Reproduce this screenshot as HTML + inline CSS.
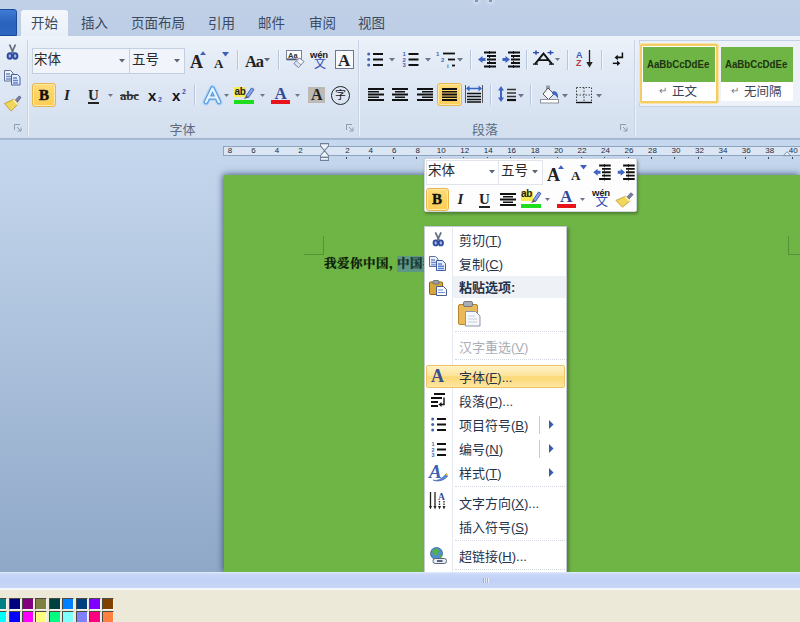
<!DOCTYPE html>
<html lang="zh-CN">
<head>
<meta charset="utf-8">
<title>Word</title>
<style>
*{box-sizing:border-box;margin:0;padding:0}
html,body{width:800px;height:622px;overflow:hidden;background:#c2d3e8;font-family:"Liberation Sans","Noto Sans CJK SC",sans-serif;}
.a{position:absolute}
svg{position:absolute;overflow:visible}
#top{left:0;top:0;width:800px;height:37px;background:linear-gradient(#c0d0e7,#bccde5);}
#filebtn{left:-4px;top:9px;width:21px;height:27px;border-radius:3px 3px 0 0;background:linear-gradient(#3f7bd6,#2a62bd 50%,#2c66c2);border:1px solid #1a4a9c;}
#tabhome{left:21px;top:10px;width:47px;height:28px;background:linear-gradient(#f4f8fc,#e8eff8);border-radius:3px 3px 0 0;}
.tab{top:14.5px;font-size:13.5px;color:#3b4a5f;white-space:nowrap;line-height:18px;}
#ribbon{left:0;top:36px;width:800px;height:102.5px;background:linear-gradient(#eef3fa,#e3ebf6 25%,#dbe5f3 60%,#d3dfee);border-bottom:1px solid #a3b5ce;box-shadow:0 1px 1px rgba(150,170,200,.6);}
.gsep{top:40px;width:1px;height:96px;background:#c8d4e5;box-shadow:1px 0 0 #eef3fa;}
.sep{width:1px;height:20px;background:#b7c6da;box-shadow:1px 0 0 #f2f6fb;}
.glabel{top:121.5px;font-size:13px;color:#5d6c82;line-height:16px;}
#work{left:0;top:140px;width:800px;height:432px;background:linear-gradient(#c6d8ee,#8fa8c8);}
#ruler{left:223px;top:146px;width:577px;height:10px;background:#dbe6f5;border:1px solid #8fa3bf;border-right:0;}
.rn{top:145px;font-size:8px;color:#1f2a40;width:20px;text-align:center;line-height:12px;}
#page{left:224px;top:175px;width:576px;height:397px;background:#6fb545;box-shadow:0 -1px 7px rgba(55,80,125,.6),-2px 0 5px rgba(70,85,115,.45);}
#hbar{left:0;top:572px;width:800px;height:16px;background:linear-gradient(#e4ecfc 0,#c9d8f8 2px,#c0d0f5 50%,#c8d7f8);}
#paint{left:0;top:588px;width:800px;height:34px;background:#ece9d8;border-top:2px solid #f6f7fb;}
.sw{width:12px;height:12px;border:1px solid;border-color:#4a4a44 #f7f6ee #f7f6ee #4a4a44;}
.combo{background:#f1f5fb;border:1px solid #c3d0e2;height:26px;}
.ctext{font-size:13.5px;color:#2b2b2b;line-height:18px;white-space:nowrap}
.btnon{background:linear-gradient(#ffdc7c,#fed362 45%,#fdcf58);border:1px solid #e8b54a;border-radius:3px;box-shadow:inset 0 0 0 1px #ffe9a8;}
.ser{font-family:"Liberation Serif",serif;font-weight:bold;color:#222;white-space:nowrap}
.mi{left:459px;font-size:13px;color:#26324a;line-height:18px;white-space:nowrap}
.msep{left:455px;width:110px;height:0;border-top:1px dotted #d3d7df}
u{text-decoration:underline}
</style>
</head>
<body>
<div id="top" class="a"></div>
<div class="a" style="left:475px;top:-2px;width:3px;height:4px;background:#6d7a92;box-shadow:0 0 3px 2px #dbe5f3;opacity:.7"></div><div class="a" style="left:489px;top:-2px;width:3px;height:4px;background:#6d7a92;box-shadow:0 0 3px 2px #dbe5f3;opacity:.7"></div>
<div id="filebtn" class="a"></div>
<div id="tabhome" class="a"></div>
<div class="a tab" style="left:31px">开始</div>
<div class="a tab" style="left:81px">插入</div>
<div class="a tab" style="left:131px">页面布局</div>
<div class="a tab" style="left:208px">引用</div>
<div class="a tab" style="left:258px">邮件</div>
<div class="a tab" style="left:309px">审阅</div>
<div class="a tab" style="left:358px">视图</div>
<div id="ribbon" class="a"></div>
<div class="a gsep" style="left:27px"></div>
<div class="a gsep" style="left:358px"></div>
<div class="a gsep" style="left:634px"></div>
<div class="a glabel" style="left:169.5px">字体</div>
<div class="a glabel" style="left:472px">段落</div>
<!-- clipboard group icons -->
<svg style="left:7px;top:44px" width="11" height="16" viewBox="0 0 11 16"><path d="M2.5 0.5 L6.3 9 M8.5 0.5 L4.7 9" stroke="#666f80" stroke-width="1.8" fill="none"/><ellipse cx="2.8" cy="12" rx="2.2" ry="2.8" fill="#aebde6" stroke="#2f4da0" stroke-width="2"/><ellipse cx="8.2" cy="12" rx="2.2" ry="2.8" fill="#aebde6" stroke="#2f4da0" stroke-width="2"/></svg>
<svg style="left:4px;top:70px" width="18" height="16" viewBox="0 0 18 16"><path d="M0.5 0.5h6l2.5 2.5v8h-8.5z" fill="#eef3fb" stroke="#5d6f93"/><path d="M2 4h4M2 6.5h5M2 9h5" stroke="#6f8cc8" stroke-width="1.3"/><path d="M7.5 4.5h6l2.5 2.5v8h-8.5z" fill="#e6eefb" stroke="#3f5fa8"/><path d="M9 8h4M9 10.5h5M9 13h5" stroke="#5f82d4" stroke-width="1.4"/></svg>
<svg style="left:3px;top:95px" width="20" height="17" viewBox="0 0 20 18"><path d="M12 6 L16.5 1 L18.5 2.5 L14.5 8z" fill="#7a7da8" stroke="#55587e" stroke-width=".8"/><path d="M1 9 L11 4.5 L15.5 9.5 L8 17 Z" fill="#f1d65c" stroke="#b9962e" stroke-width=".9"/><path d="M10.5 5 L15 10" stroke="#fff6c8" stroke-width="1.5"/></svg>
<svg style="left:14px;top:124px" width="8" height="8" viewBox="0 0 8 8"><path d="M0.5 6V0.5H6" stroke="#8e9bb0" fill="none"/><path d="M3 3L7 7M7 3.5V7H3.5" stroke="#8e9bb0" fill="none"/></svg>
<svg style="left:346px;top:124px" width="8" height="8" viewBox="0 0 8 8"><path d="M0.5 6V0.5H6" stroke="#8e9bb0" fill="none"/><path d="M3 3L7 7M7 3.5V7H3.5" stroke="#8e9bb0" fill="none"/></svg>
<svg style="left:620px;top:124px" width="8" height="8" viewBox="0 0 8 8"><path d="M0.5 6V0.5H6" stroke="#8e9bb0" fill="none"/><path d="M3 3L7 7M7 3.5V7H3.5" stroke="#8e9bb0" fill="none"/></svg>

<!-- row 1 : font combos -->
<div class="a combo" style="left:32px;top:48px;width:98px"></div>
<div class="a combo" style="left:129px;top:48px;width:56px"></div>
<div class="a ctext" style="left:34px;top:51px">宋体</div>
<div class="a ctext" style="left:132px;top:51px">五号</div>
<svg style="left:119px;top:59px" width="6" height="4" viewBox="0 0 6 4"><path d="M0 0h6l-3 3.5z" fill="#5b6577"/></svg>
<svg style="left:174px;top:59px" width="6" height="4" viewBox="0 0 6 4"><path d="M0 0h6l-3 3.5z" fill="#5b6577"/></svg>
<!-- grow / shrink -->
<div class="a ser" style="left:190px;top:51px;font-size:18px;line-height:22px">A</div>
<svg style="left:200px;top:51px" width="6" height="4" viewBox="0 0 6 4"><path d="M0 4h6l-3 -3.8z" fill="#3e5fb5"/></svg>
<div class="a ser" style="left:214px;top:54.5px;font-size:13px;line-height:18px">A</div>
<svg style="left:222px;top:52px" width="7" height="5" viewBox="0 0 7 5"><path d="M0 0h7l-3.5 4.5z" fill="#3e5fb5"/></svg>
<div class="a sep" style="left:237px;top:50px"></div>
<div class="a ser" style="left:245px;top:50.5px;font-size:16.5px;line-height:22px;letter-spacing:-1.2px">Aa</div>
<svg style="left:264px;top:58px" width="6" height="4" viewBox="0 0 6 4"><path d="M0 0h6l-3 3.5z" fill="#5b6577"/></svg>
<div class="a sep" style="left:278px;top:50px"></div>
<!-- clear formatting -->
<svg style="left:286px;top:50px" width="19" height="18" viewBox="0 0 19 18"><rect x="0.5" y="0.5" width="15" height="8.5" fill="#fdfdff" stroke="#77839a"/><text x="2" y="7.5" font-family="Liberation Sans, sans-serif" font-size="7.5" font-weight="bold" fill="#333">Aa</text><path d="M0.5 9.5h10" stroke="#4a5878" stroke-width="1.6"/><path d="M8 13.5 L13.5 8 L18 11.5 L12.5 17.5 Z" fill="#f4f6fb" stroke="#7783a0" stroke-width="1"/><path d="M8 13.5 L10.5 11 L15 15 L12.5 17.5Z" fill="#dfe5f2" stroke="#7783a0" stroke-width=".8"/></svg>
<!-- phonetic guide -->
<div class="a" style="left:310px;top:50px;font-size:9.5px;font-weight:bold;color:#222;line-height:10px;letter-spacing:-.2px">wén</div>
<div class="a" style="left:314px;top:57.5px;font-size:12px;color:#2f49b8;line-height:13px;font-family:'Liberation Sans','Noto Sans CJK SC',sans-serif">文</div>
<!-- boxed A -->
<div class="a" style="left:335px;top:50px;width:18.5px;height:18.5px;border:1px solid #6c7891;background:#f7f9fc"></div>
<div class="a ser" style="left:338px;top:50px;font-size:17px;line-height:22px">A</div>

<!-- paragraph row 1 -->
<svg style="left:367px;top:52px" width="17" height="15" viewBox="0 0 17 15"><g fill="#4663b4"><circle cx="1.7" cy="2" r="1.5"/><circle cx="1.7" cy="7.5" r="1.5"/><circle cx="1.7" cy="13" r="1.5"/></g><path d="M6 2h10M6 7.5h10M6 13h10" stroke="#111" stroke-width="2"/></svg>
<svg style="left:389px;top:58px" width="6" height="4" viewBox="0 0 6 4"><path d="M0 0h6l-3 3.5z" fill="#6b7689"/></svg>
<svg style="left:402px;top:50px" width="17" height="18" viewBox="0 0 17 18"><g font-family="Liberation Sans, sans-serif" font-size="6" font-weight="bold" fill="#4663b4"><text x="0.5" y="6">1</text><text x="0.5" y="11.5">2</text><text x="0.5" y="17">3</text></g><path d="M6.5 4h10M6.5 9.5h10M6.5 15h10" stroke="#111" stroke-width="2"/></svg>
<svg style="left:425px;top:58px" width="6" height="4" viewBox="0 0 6 4"><path d="M0 0h6l-3 3.5z" fill="#6b7689"/></svg>
<svg style="left:436px;top:50px" width="20" height="18" viewBox="0 0 20 18"><g font-family="Liberation Sans, sans-serif" font-size="6" font-weight="bold" fill="#4663b4"><text x="0" y="6">1</text><text x="5" y="12">2</text><text x="11" y="17.5">i</text></g><path d="M7 3.5h12" stroke="#111" stroke-width="1.8"/><path d="M12 9.5h7" stroke="#111" stroke-width="1.8"/><path d="M16 15.5h3" stroke="#111" stroke-width="1.8"/></svg>
<svg style="left:457px;top:58px" width="6" height="4" viewBox="0 0 6 4"><path d="M0 0h6l-3 3.5z" fill="#6b7689"/></svg>
<div class="a sep" style="left:470px;top:50px"></div>
<!-- decrease / increase indent -->
<svg style="left:478px;top:51px" width="18" height="17" viewBox="0 0 18 17"><path d="M6 1.5h12M9 5h9M9 8.5h9M9 12h9M6 15.5h12" stroke="#111" stroke-width="2"/><path d="M11.5 0v17" stroke="#111" stroke-width="1" stroke-dasharray="1 1"/><path d="M0 8.5l4.5 -3.5v2h3v3h-3v2z" fill="#3f63c0"/></svg>
<svg style="left:502px;top:51px" width="18" height="17" viewBox="0 0 18 17"><path d="M6 1.5h12M9 5h9M9 8.5h9M9 12h9M6 15.5h12" stroke="#111" stroke-width="2"/><path d="M11.5 0v17" stroke="#111" stroke-width="1" stroke-dasharray="1 1"/><path d="M8 8.5l-4.5 -3.5v2h-3v3h3v2z" fill="#3f63c0"/></svg>
<div class="a sep" style="left:526px;top:50px"></div>
<!-- asian layout -->
<svg style="left:533px;top:50px" width="21" height="15" viewBox="0 0 21 17" preserveAspectRatio="none"><path d="M2 16 L10.5 4 L19 16 M5.5 11.5 h10" stroke="#111" stroke-width="2" fill="none"/><path d="M0 16h5M16 16h5" stroke="#111" stroke-width="1.6"/><path d="M0 3h6M3 0.5v5M14.5 3h6M17.5 0.5v5" stroke="#2a46b0" stroke-width="1.5"/></svg>
<svg style="left:555px;top:58px" width="5" height="4" viewBox="0 0 5 4"><path d="M0 0h5l-2.5 3z" fill="#6b7689"/></svg>
<div class="a sep" style="left:567px;top:50px"></div>
<!-- sort -->
<div class="a" style="left:576px;top:49.5px;font-size:9px;font-weight:bold;color:#3b5ab3;line-height:11px">A</div>
<div class="a" style="left:576px;top:58px;font-size:9px;font-weight:bold;color:#b43c46;line-height:11px">Z</div>
<svg style="left:586px;top:50px" width="7" height="18" viewBox="0 0 7 18"><path d="M3.5 0v14" stroke="#222" stroke-width="1.3"/><path d="M0.3 12l3.2 5.5l3.2 -5.5z" fill="#222"/></svg>
<div class="a sep" style="left:601px;top:50px"></div>
<!-- show marks -->
<svg style="left:612px;top:52px" width="12.5" height="14.5" viewBox="0 0 15 16" preserveAspectRatio="none"><path d="M12.5 0.5v5.5h-7" stroke="#111" stroke-width="1.8" fill="none"/><path d="M3 6l4 -3v6z" fill="#111"/><path d="M1 12.5h6" stroke="#111" stroke-width="1.6"/><path d="M6 9.5l4 3l-4 3z" fill="#111"/></svg>

<!-- row 2 -->
<div class="a btnon" style="left:32px;top:83px;width:24px;height:23.5px"></div>
<div class="a ser" style="left:39px;top:86px;font-size:15px;line-height:18px;color:#111;-webkit-text-stroke:.5px #111">B</div>
<div class="a ser" style="left:64px;top:86px;font-size:15px;line-height:18px;font-style:italic;font-weight:bold">I</div>
<div class="a ser" style="left:88px;top:86px;font-size:15px;line-height:18px;">U</div>
<div class="a" style="left:88px;top:102px;width:11px;height:1.5px;background:#222"></div>
<svg style="left:108px;top:94px" width="5" height="4" viewBox="0 0 5 4"><path d="M0 0h5l-2.5 3z" fill="#6b7689"/></svg>
<div class="a ser" style="left:120px;top:87px;font-size:13px;line-height:18px;color:#333;text-decoration:line-through;letter-spacing:-.3px">abc</div>
<div class="a" style="left:148px;top:86px;font-size:15px;line-height:20px;font-weight:bold;color:#111">x</div>
<div class="a" style="left:158px;top:96px;font-size:7px;line-height:8px;font-weight:bold;color:#3b5ab3">2</div>
<div class="a" style="left:172px;top:86px;font-size:15px;line-height:20px;font-weight:bold;color:#111">x</div>
<div class="a" style="left:182px;top:87.5px;font-size:7px;line-height:8px;font-weight:bold;color:#3b5ab3">2</div>
<div class="a sep" style="left:194px;top:85px"></div>
<!-- text effects glow A -->
<svg style="left:202px;top:85px" width="21" height="20" viewBox="0 0 21 20"><path d="M4 17 L10.5 3.5 L17 17 M7 12.5h7" stroke="#a9d0f5" stroke-width="7" fill="none" stroke-linecap="round" stroke-linejoin="round" opacity=".85"/><path d="M4 17 L10.5 3.5 L17 17 M7 12.5h7" stroke="#5a9be0" stroke-width="4.6" fill="none" stroke-linecap="round" stroke-linejoin="round"/><path d="M4 17 L10.5 3.5 L17 17 M7 12.5h7" stroke="#eaf4ff" stroke-width="2.2" fill="none" stroke-linecap="round" stroke-linejoin="round"/></svg>
<svg style="left:224px;top:94px" width="5" height="4" viewBox="0 0 5 4"><path d="M0 0h5l-2.5 3z" fill="#6b7689"/></svg>
<!-- highlight -->
<div class="a" style="left:234px;top:87px;width:12px;height:10px;background:#f7ec52"></div>
<div class="a" style="left:234.5px;top:85.5px;font-size:10px;font-weight:bold;line-height:12px;color:#222;letter-spacing:-.3px">ab</div>
<svg style="left:243px;top:86px" width="12" height="14" viewBox="0 0 12 14"><path d="M3 10 L8.5 2 L11 3.5 L5.5 11.5Z" fill="#8aa6e4" stroke="#3b58ad" stroke-width=".9"/><path d="M1 13 L3 10 L5.5 11.5Z" fill="#555"/></svg>
<div class="a" style="left:234px;top:100px;width:20px;height:4px;background:#1fdd1f"></div>
<svg style="left:260px;top:94px" width="5" height="4" viewBox="0 0 5 4"><path d="M0 0h5l-2.5 3z" fill="#6b7689"/></svg>
<!-- font colour -->
<div class="a ser" style="left:274.5px;top:84px;font-size:17px;line-height:20px;color:#2f4a9c">A</div>
<div class="a" style="left:271px;top:100px;width:19px;height:4px;background:#e8141c"></div>
<svg style="left:295px;top:94px" width="5" height="4" viewBox="0 0 5 4"><path d="M0 0h5l-2.5 3z" fill="#6b7689"/></svg>
<!-- char shading -->
<div class="a" style="left:308px;top:87px;width:17px;height:16px;background:#bdbab4"></div>
<div class="a ser" style="left:311px;top:85px;font-size:16px;line-height:20px;color:#222">A</div>
<!-- enclosed char -->
<div class="a" style="left:331px;top:86px;width:19px;height:19px;border:1.5px solid #222;border-radius:50%"></div>
<div class="a" style="left:335px;top:89px;font-size:11px;line-height:13px;color:#111">字</div>

<!-- paragraph row 2 -->
<svg style="left:368px;top:88px" width="16" height="13" viewBox="0 0 16 13"><path d="M0 1h16M0 6.5h16M0 12h16" stroke="#111" stroke-width="2"/><path d="M0 3.8h11M0 9.3h11" stroke="#111" stroke-width="1.5"/></svg>
<svg style="left:392px;top:88px" width="16" height="13" viewBox="0 0 16 13"><path d="M0 1h16M0 6.5h16M0 12h16" stroke="#111" stroke-width="2"/><path d="M3 3.8h10M3 9.3h10" stroke="#111" stroke-width="1.5"/></svg>
<svg style="left:417px;top:88px" width="16" height="13" viewBox="0 0 16 13"><path d="M0 1h16M0 6.5h16M0 12h16" stroke="#111" stroke-width="2"/><path d="M5 3.8h11M5 9.3h11" stroke="#111" stroke-width="1.5"/></svg>
<div class="a btnon" style="left:437px;top:83px;width:25px;height:23px"></div>
<svg style="left:442px;top:88px" width="15" height="13" viewBox="0 0 15 13"><path d="M0 1h15M0 6.5h15M0 12h15" stroke="#111" stroke-width="2"/><path d="M0 3.8h15M0 9.3h15" stroke="#111" stroke-width="1.5"/></svg>
<svg style="left:465px;top:85px" width="18" height="18" viewBox="0 0 18 18"><path d="M0.5 0v18M17.5 0v18" stroke="#555" stroke-width="1"/><path d="M2 3.5h14" stroke="#3466c8" stroke-width="1.5"/><path d="M1 3.5l3.5 -3v6zM17 3.5l-3.5 -3v6z" fill="#3466c8"/><path d="M2 8.5h14M2 11.5h14M2 14.5h14M2 17h14" stroke="#111" stroke-width="1.6"/></svg>
<div class="a sep" style="left:490px;top:85px"></div>
<!-- line spacing -->
<svg style="left:498px;top:85px" width="19" height="18" viewBox="0 0 19 18"><path d="M3 1l3 4.5h-2v7h2l-3 4.5l-3 -4.5h2v-7h-2z" fill="#3f63c0"/><path d="M9 4.5h9M9 8h9M9 11.5h9" stroke="#333" stroke-width="1.3"/><path d="M9 15h9" stroke="#111" stroke-width="2.2"/></svg>
<svg style="left:518px;top:94px" width="6" height="4" viewBox="0 0 6 4"><path d="M0 0h6l-3 3.5z" fill="#6b7689"/></svg>
<div class="a sep" style="left:530px;top:85px"></div>
<!-- shading bucket -->
<svg style="left:540px;top:84px" width="20" height="20" viewBox="0 0 20 20"><path d="M7 1.5 v6 M9 1.5 v6" stroke="#555" stroke-width="1"/><path d="M3 10 L8 4 L14 10 L8.5 15.5Z" fill="#f6f8fc" stroke="#555" stroke-width="1"/><path d="M13 7 C17 7 18.5 10 18 14.5 C16 12 15 10.5 12 10Z" fill="#3f66c4"/><rect x="0.5" y="15.5" width="18" height="3.5" fill="#fff" stroke="#8c919c"/></svg>
<svg style="left:562px;top:94px" width="6" height="4" viewBox="0 0 6 4"><path d="M0 0h6l-3 3.5z" fill="#6b7689"/></svg>
<!-- borders -->
<svg style="left:576px;top:87px" width="16" height="16" viewBox="0 0 16 16"><path d="M0.5 0.5h15M0.5 0.5v15M15.5 0.5v15M8 0.5v15M0.5 8h15" stroke="#444" stroke-width="1" stroke-dasharray="1.5 1.5" fill="none"/><path d="M0 15.5h16" stroke="#111" stroke-width="1.4"/></svg>
<svg style="left:596px;top:94px" width="6" height="4" viewBox="0 0 6 4"><path d="M0 0h6l-3 3.5z" fill="#6b7689"/></svg>

<!-- styles gallery -->
<div class="a" style="left:639px;top:40px;width:161px;height:67px;background:#edf2fa;border:1px solid #c5d2e4;border-right:0"></div>
<div class="a" style="left:640px;top:44px;width:78px;height:59px;background:#fff;border:2px solid #f3cd63;border-radius:2px;box-shadow:0 0 0 1px #f8e4a8"></div>
<div class="a" style="left:643px;top:47px;width:72px;height:35px;background:#6fb545"></div>
<div class="a" style="left:721px;top:47px;width:72px;height:35px;background:#6fb545"></div>
<div class="a" style="left:721px;top:82px;width:72px;height:19px;background:#fff"></div>
<div class="a" style="left:647px;top:57px;font-size:11.5px;font-weight:bold;color:#1c3310;line-height:14px;transform:scaleX(.84);transform-origin:0 0">AaBbCcDdEe</div>
<div class="a" style="left:725px;top:57px;font-size:11.5px;font-weight:bold;color:#1c3310;line-height:14px;transform:scaleX(.84);transform-origin:0 0">AaBbCcDdEe</div>
<div class="a" style="left:659px;top:84px;font-size:10px;color:#6a7690;line-height:14px">↵</div>
<div class="a" style="left:672px;top:84px;font-size:12.5px;color:#3b4558;line-height:16px">正文</div>
<div class="a" style="left:731px;top:84px;font-size:10px;color:#6a7690;line-height:14px">↵</div>
<div class="a" style="left:744px;top:84px;font-size:12.5px;color:#3b4558;line-height:16px">无间隔</div>


<div id="work" class="a"></div>
<div id="ruler" class="a"></div>
<div class="a rn" style="left:220.0px">8</div><div class="a rn" style="left:243.5px">6</div><div class="a rn" style="left:266.9px">4</div><div class="a rn" style="left:290.4px">2</div><div class="a" style="left:345.9px;top:157px;width:1px;height:2px;background:#3f4a5e"></div><div class="a rn" style="left:337.4px">2</div><div class="a" style="left:369.3px;top:157px;width:1px;height:2px;background:#3f4a5e"></div><div class="a rn" style="left:360.8px">4</div><div class="a" style="left:392.8px;top:157px;width:1px;height:2px;background:#3f4a5e"></div><div class="a rn" style="left:384.3px">6</div><div class="a" style="left:416.3px;top:157px;width:1px;height:2px;background:#3f4a5e"></div><div class="a rn" style="left:407.8px">8</div><div class="a" style="left:439.7px;top:157px;width:1px;height:2px;background:#3f4a5e"></div><div class="a rn" style="left:431.2px">10</div><div class="a" style="left:463.2px;top:157px;width:1px;height:2px;background:#3f4a5e"></div><div class="a rn" style="left:454.7px">12</div><div class="a" style="left:486.7px;top:157px;width:1px;height:2px;background:#3f4a5e"></div><div class="a rn" style="left:478.2px">14</div><div class="a" style="left:510.1px;top:157px;width:1px;height:2px;background:#3f4a5e"></div><div class="a rn" style="left:501.6px">16</div><div class="a" style="left:533.6px;top:157px;width:1px;height:2px;background:#3f4a5e"></div><div class="a rn" style="left:525.1px">18</div><div class="a" style="left:557.1px;top:157px;width:1px;height:2px;background:#3f4a5e"></div><div class="a rn" style="left:548.6px">20</div><div class="a" style="left:580.5px;top:157px;width:1px;height:2px;background:#3f4a5e"></div><div class="a rn" style="left:572.0px">22</div><div class="a" style="left:604.0px;top:157px;width:1px;height:2px;background:#3f4a5e"></div><div class="a rn" style="left:595.5px">24</div><div class="a" style="left:627.5px;top:157px;width:1px;height:2px;background:#3f4a5e"></div><div class="a rn" style="left:619.0px">26</div><div class="a" style="left:651.0px;top:157px;width:1px;height:2px;background:#3f4a5e"></div><div class="a rn" style="left:642.5px">28</div><div class="a" style="left:674.4px;top:157px;width:1px;height:2px;background:#3f4a5e"></div><div class="a rn" style="left:665.9px">30</div><div class="a" style="left:697.9px;top:157px;width:1px;height:2px;background:#3f4a5e"></div><div class="a rn" style="left:689.4px">32</div><div class="a" style="left:721.4px;top:157px;width:1px;height:2px;background:#3f4a5e"></div><div class="a rn" style="left:712.9px">34</div><div class="a" style="left:744.8px;top:157px;width:1px;height:2px;background:#3f4a5e"></div><div class="a rn" style="left:736.3px">36</div><div class="a" style="left:768.3px;top:157px;width:1px;height:2px;background:#3f4a5e"></div><div class="a rn" style="left:759.8px">38</div><div class="a" style="left:791.8px;top:157px;width:1px;height:2px;background:#3f4a5e"></div><div class="a rn" style="left:783.3px">40</div>
<div id="page" class="a"></div>
<!-- ruler indent markers -->
<svg style="left:319.5px;top:143px" width="9" height="18" viewBox="0 0 10 15" preserveAspectRatio="none"><path d="M0.5 0.5h9v2l-4.5 4l-4.5 -4z" fill="#eef3fa" stroke="#6f7f98"/><path d="M0.5 10.5l4.5 -4l4.5 4v1.5h-9z" fill="#eef3fa" stroke="#6f7f98"/><rect x="0.5" y="12" width="9" height="2.5" fill="#eef3fa" stroke="#6f7f98"/></svg>
<svg style="left:783px;top:149px" width="8" height="7" viewBox="0 0 10 9" preserveAspectRatio="none"><path d="M0.5 8.5l4.5 -5l4.5 5z" fill="#eef3fa" stroke="#6f7f98"/></svg>
<!-- crop marks -->
<div class="a" style="left:304px;top:236px;width:20px;height:19px;border-right:1px solid #4f8a35;border-bottom:1px solid #4f8a35;opacity:.8"></div>
<div class="a" style="left:788px;top:236px;width:14px;height:19px;border-left:1px solid #4f8a35;border-bottom:1px solid #4f8a35;opacity:.8"></div>
<!-- document text -->
<div class="a" style="left:397px;top:256px;width:30px;height:16px;background:#5f9787"></div>
<div class="a" style="left:324px;top:255px;font-family:'Liberation Serif','Noto Serif CJK SC',serif;font-weight:bold;font-size:12.5px;letter-spacing:.5px;line-height:18px;color:#0b1a06;-webkit-text-stroke:.25px #0b1a06;white-space:nowrap">我爱你中国<span style="margin-right:-5px">，</span><span style="color:#123a3a">中国我</span></div>

<!-- mini toolbar -->
<div class="a" style="left:424px;top:158px;width:213px;height:54px;background:#fdfdfe;border:1px solid #cfd6df;border-radius:2px;box-shadow:1px 2px 3px rgba(40,60,30,.45)"></div>
<div class="a" style="left:426px;top:160px;width:73px;height:25px;border:1px solid #e0e5ec;background:#fff"></div>
<div class="a" style="left:498px;top:160px;width:45px;height:25px;border:1px solid #e0e5ec;background:#fff"></div>
<div class="a ctext" style="left:428px;top:162px;font-size:13.5px">宋体</div>
<div class="a ctext" style="left:501px;top:162px;font-size:13.5px">五号</div>
<svg style="left:489px;top:170px" width="6" height="4" viewBox="0 0 6 4"><path d="M0 0h6l-3 3.5z" fill="#5b6577"/></svg>
<svg style="left:532px;top:170px" width="6" height="4" viewBox="0 0 6 4"><path d="M0 0h6l-3 3.5z" fill="#5b6577"/></svg>
<div class="a ser" style="left:547px;top:164px;font-size:18px;line-height:22px">A</div>
<svg style="left:557.5px;top:164.5px" width="6" height="4" viewBox="0 0 6 4"><path d="M0 4h6l-3 -3.8z" fill="#3e5fb5"/></svg>
<div class="a ser" style="left:571px;top:167px;font-size:13px;line-height:18px">A</div>
<svg style="left:579.5px;top:165px" width="7" height="5" viewBox="0 0 7 5"><path d="M0 0h7l-3.5 4.5z" fill="#3e5fb5"/></svg>
<svg style="left:593px;top:163.5px" width="18" height="16.5" viewBox="0 0 18 17"><path d="M6 1.5h12M9 5h9M9 8.5h9M9 12h9M6 15.5h12" stroke="#111" stroke-width="2"/><path d="M11.5 0v17" stroke="#111" stroke-width="1" stroke-dasharray="1 1"/><path d="M0 8.5l4.5 -3.5v2h3v3h-3v2z" fill="#3f63c0"/></svg>
<svg style="left:616.5px;top:163.5px" width="18" height="16.5" viewBox="0 0 18 17"><path d="M6 1.5h12M9 5h9M9 8.5h9M9 12h9M6 15.5h12" stroke="#111" stroke-width="2"/><path d="M11.5 0v17" stroke="#111" stroke-width="1" stroke-dasharray="1 1"/><path d="M8 8.5l-4.5 -3.5v2h-3v3h3v2z" fill="#3f63c0"/></svg>
<!-- mini row 2 -->
<div class="a btnon" style="left:426px;top:188px;width:23px;height:23px"></div>
<div class="a ser" style="left:432px;top:190px;font-size:15px;line-height:18px;color:#111;-webkit-text-stroke:.4px #111">B</div>
<div class="a ser" style="left:457.5px;top:190px;font-size:15px;line-height:18px;font-style:italic">I</div>
<div class="a ser" style="left:479px;top:190px;font-size:15px;line-height:18px">U</div>
<div class="a" style="left:479px;top:206px;width:11px;height:1.5px;background:#222"></div>
<svg style="left:500px;top:193px" width="16" height="13" viewBox="0 0 16 13"><path d="M0 1h16M0 6.5h16M0 12h16" stroke="#111" stroke-width="2"/><path d="M3 3.8h10M3 9.3h10" stroke="#111" stroke-width="1.5"/></svg>
<div class="a" style="left:521px;top:191px;width:12px;height:10px;background:#f7ec52"></div>
<div class="a" style="left:521px;top:188px;font-size:10px;font-weight:bold;line-height:12px;color:#222;letter-spacing:-.3px">ab</div>
<svg style="left:530px;top:190px" width="12" height="14" viewBox="0 0 12 14"><path d="M3 10 L8.5 2 L11 3.5 L5.5 11.5Z" fill="#8aa6e4" stroke="#3b58ad" stroke-width=".9"/><path d="M1 13 L3 10 L5.5 11.5Z" fill="#555"/></svg>
<div class="a" style="left:521px;top:204px;width:20px;height:4px;background:#1fdd1f"></div>
<svg style="left:545px;top:198px" width="5" height="4" viewBox="0 0 5 4"><path d="M0 0h5l-2.5 3z" fill="#6b7689"/></svg>
<div class="a ser" style="left:560px;top:187px;font-size:17px;line-height:20px;color:#2f4a9c">A</div>
<div class="a" style="left:557px;top:204px;width:19px;height:4px;background:#e8141c"></div>
<svg style="left:580px;top:198px" width="5" height="4" viewBox="0 0 5 4"><path d="M0 0h5l-2.5 3z" fill="#6b7689"/></svg>
<div class="a" style="left:592px;top:188px;font-size:9.5px;font-weight:bold;color:#222;line-height:10px;letter-spacing:-.2px">wén</div>
<div class="a" style="left:595.5px;top:196px;font-size:12.5px;color:#2f49b8;line-height:13px">文</div>
<svg style="left:615px;top:192px" width="19.5" height="16" viewBox="0 0 21 19" preserveAspectRatio="none"><path d="M12.5 6.5 L17 1 L19.5 3 L15 8.5z" fill="#7a7da8" stroke="#55587e" stroke-width=".8"/><path d="M1 10 L11.5 5 L16.5 10.5 L8 18 Z" fill="#f1d65c" stroke="#b9962e" stroke-width=".9"/><path d="M11 5.5 L16 11" stroke="#fff6c8" stroke-width="1.5"/></svg>

<!-- context menu -->
<div class="a" style="left:424px;top:226px;width:143px;height:346px;background:#fff;border:1px solid #c4c9d2;border-bottom:0;box-shadow:2px 2px 3px rgba(40,60,30,.45)"></div>
<div class="a" style="left:452px;top:228px;width:1px;height:344px;background:#e6e9ef"></div>
<div class="a" style="left:453px;top:276px;width:113px;height:22px;background:#eef1f6"></div>
<div class="a" style="left:426px;top:365px;width:139px;height:23px;border:1px solid #f0c460;border-radius:2px;background:linear-gradient(#fef2c6,#fde49c 45%,#fbd874 52%,#fde6a0)"></div>
<div class="a mi" style="top:232px">剪切(<u>T</u>)</div>
<div class="a mi" style="top:256px">复制(<u>C</u>)</div>
<div class="a mi" style="top:279px;font-weight:bold">粘贴选项:</div>
<div class="a msep" style="top:331px"></div>
<div class="a mi" style="top:339px;color:#a9aeb8">汉字重选(<u>V</u>)</div>
<div class="a msep" style="top:359px"></div>
<div class="a mi" style="top:369px">字体(<u>F</u>)...</div>
<div class="a mi" style="top:393px">段落(<u>P</u>)...</div>
<div class="a mi" style="top:417px">项目符号(<u>B</u>)</div>
<div class="a mi" style="top:441px">编号(<u>N</u>)</div>
<div class="a mi" style="top:465px">样式(<u>T</u>)</div>
<div class="a msep" style="top:486px"></div>
<div class="a mi" style="top:495px">文字方向(<u>X</u>)...</div>
<div class="a mi" style="top:519px">插入符号(<u>S</u>)</div>
<div class="a msep" style="top:540px"></div>
<div class="a mi" style="top:548px">超链接(<u>H</u>)...</div>
<div class="a msep" style="top:569px"></div>
<!-- submenu arrows -->
<div class="a" style="left:539px;top:416px;width:1px;height:18px;background:#c5cad3"></div>
<div class="a" style="left:539px;top:440px;width:1px;height:18px;background:#c5cad3"></div>
<svg style="left:549px;top:420px" width="5" height="9" viewBox="0 0 5 9"><path d="M0 0l4.5 4.5l-4.5 4.5z" fill="#3b5ab3"/></svg>
<svg style="left:549px;top:444px" width="5" height="9" viewBox="0 0 5 9"><path d="M0 0l4.5 4.5l-4.5 4.5z" fill="#3b5ab3"/></svg>
<svg style="left:549px;top:468px" width="5" height="9" viewBox="0 0 5 9"><path d="M0 0l4.5 4.5l-4.5 4.5z" fill="#3b5ab3"/></svg>
<!-- menu icons -->
<svg style="left:432.5px;top:232px" width="10.5" height="14.5" viewBox="0 0 11 16" preserveAspectRatio="none"><path d="M2.5 0.5 L6.3 9 M8.5 0.5 L4.7 9" stroke="#666f80" stroke-width="1.8" fill="none"/><ellipse cx="2.8" cy="12" rx="2.2" ry="2.8" fill="#aebde6" stroke="#2f4da0" stroke-width="2"/><ellipse cx="8.2" cy="12" rx="2.2" ry="2.8" fill="#aebde6" stroke="#2f4da0" stroke-width="2"/></svg>
<svg style="left:429px;top:256px" width="18" height="15" viewBox="0 0 18 15"><path d="M0.5 0.5h6l2.5 2.5v7.5h-8.5z" fill="#eef3fb" stroke="#5d6f93"/><path d="M2 4h4M2 6.5h5M2 8.800h5" stroke="#6f8cc8" stroke-width="1.3"/><path d="M7.5 4.5h6l3 3v7h-9z" fill="#e6eefb" stroke="#3f5fa8"/><path d="M9 8h4M9 10.2h6M9 12.5h6" stroke="#5f82d4" stroke-width="1.4"/></svg>
<svg style="left:429px;top:280px" width="18" height="16" viewBox="0 0 18 16"><rect x="0.5" y="2" width="13" height="12.5" rx="1" fill="#d8a83c" stroke="#8a6418"/><rect x="4" y="0.5" width="6" height="3.5" rx="1" fill="#9b9fa8" stroke="#5d626e" stroke-width=".8"/><path d="M7.5 6.5h7l3 3v6h-10z" fill="#fbfcfe" stroke="#4a5d8a"/><path d="M9 10h5M9 12.5h7" stroke="#6f8fd8"/></svg>
<svg style="left:458px;top:301px" width="23" height="26" viewBox="0 0 23 26"><rect x="0.5" y="3.5" width="19" height="20" rx="1.5" fill="#e9b95a" stroke="#b5852c"/><rect x="5.5" y="0.5" width="9" height="5" rx="1.5" fill="#a9adb6" stroke="#6d727e" stroke-width=".9"/><path d="M7.5 10.5h10l4.5 4.5v10h-14.5z" fill="#f6f8fc" stroke="#8b96ac"/><path d="M10 15h7M10 18h9M10 21h9" stroke="#c5cedf"/></svg>
<div class="a ser" style="left:431px;top:365px;font-size:18px;line-height:22px;color:#3b4f8c">A</div>
<svg style="left:431px;top:393px" width="15" height="15" viewBox="0 0 15 15"><path d="M3 1h11M0 5h11M0 9h7M0 13h7" stroke="#111" stroke-width="1.8"/><path d="M13 4.5v7h-4" stroke="#111" stroke-width="1.4" fill="none"/><path d="M7.5 11.5l3 -2.6v5.2z" fill="#111"/></svg>
<svg style="left:431px;top:417px" width="15" height="15" viewBox="0 0 15 15"><g fill="#4663b4"><circle cx="1.7" cy="2" r="1.5"/><circle cx="1.7" cy="7.5" r="1.5"/><circle cx="1.7" cy="13" r="1.5"/></g><path d="M6 2h9M6 7.5h9M6 13h9" stroke="#111" stroke-width="2"/></svg>
<svg style="left:431px;top:441px" width="15" height="17" viewBox="0 0 15 17"><g font-family="Liberation Sans, sans-serif" font-size="5.5" font-weight="bold" fill="#4663b4"><text x="0.5" y="5">1</text><text x="0.5" y="10.5">2</text><text x="0.5" y="16">3</text></g><path d="M6 3h9M6 8.5h9M6 14h9" stroke="#111" stroke-width="2"/></svg>
<div class="a ser" style="left:429px;top:460.5px;font-size:19px;line-height:22px;color:#3f5fae;font-style:italic;font-weight:bold">A</div>
<svg style="left:433px;top:473px" width="15" height="9" viewBox="0 0 15 9"><path d="M0 7 C4 8.5 9 6 13.5 0.5 L14.5 3.5 C11 7 6 9.5 0 7Z" fill="#5d86d2" stroke="#3a5aa6" stroke-width=".6"/><path d="M12.5 1 L14.8 3.8 L14 0Z" fill="#f0c23c"/></svg>
<svg style="left:429px;top:492px" width="18" height="18" viewBox="0 0 18 18"><path d="M1.5 0v15M6 0v15" stroke="#222" stroke-width="1.3"/><path d="M0 14l1.5 3.5l1.5 -3.5zM4.5 14l1.5 3.5l1.5 -3.5z" fill="#222"/><path d="M10.5 9v6M15 9v6" stroke="#222" stroke-width="1.3" stroke-dasharray="1.5 1"/><path d="M9 14l1.5 3.5l1.5 -3.5zM13.5 14l1.5 3.5l1.5 -3.5z" fill="#222"/><text x="9" y="8" font-family="Liberation Serif, serif" font-weight="bold" font-size="9.5" fill="#2f4a9c">A</text></svg>
<svg style="left:429px;top:547px" width="18" height="17" viewBox="0 0 18 17"><circle cx="7.5" cy="6.5" r="6" fill="#4f8fd0" stroke="#2f5f9a" stroke-width=".8"/><path d="M4 3c2 -2 5 -1.5 6 0.5c0.5 2 -1.5 2.5 -2 4.5c-1 1.5 -3 0.5 -3.5 -1.5c-1.2 -1 -1.5 -2.5 -0.5 -3.5z" fill="#55b04a"/><path d="M10 8c1.5 -0.5 2.5 0 3 1l-1.5 2.5z" fill="#55b04a"/><rect x="4" y="11.5" width="13.5" height="5" rx="2.2" fill="#e8ecf4" stroke="#59657c"/><rect x="8" y="13" width="5.5" height="2" fill="#59657c"/></svg>


<div id="hbar" class="a"></div>
<div class="a" style="left:483px;top:578px;width:6px;height:5px;background:repeating-linear-gradient(90deg,#9fb0da 0,#9fb0da 1px,#e6ecfc 1px,#e6ecfc 2px)"></div>
<div id="paint" class="a"></div>
<div class="a sw" style="left:-4.8px;top:597.5px;background:#008080"></div><div class="a sw" style="left:-4.8px;top:611px;background:#00ffff"></div>
<div class="a sw" style="left:8.6px;top:597.5px;background:#000080"></div><div class="a sw" style="left:8.6px;top:611px;background:#0000ff"></div>
<div class="a sw" style="left:22.0px;top:597.5px;background:#800080"></div><div class="a sw" style="left:22.0px;top:611px;background:#ff00ff"></div>
<div class="a sw" style="left:35.4px;top:597.5px;background:#808040"></div><div class="a sw" style="left:35.4px;top:611px;background:#ffff80"></div>
<div class="a sw" style="left:48.8px;top:597.5px;background:#004040"></div><div class="a sw" style="left:48.8px;top:611px;background:#00ff80"></div>
<div class="a sw" style="left:62.2px;top:597.5px;background:#0080ff"></div><div class="a sw" style="left:62.2px;top:611px;background:#80ffff"></div>
<div class="a sw" style="left:75.6px;top:597.5px;background:#004080"></div><div class="a sw" style="left:75.6px;top:611px;background:#8080ff"></div>
<div class="a sw" style="left:89.0px;top:597.5px;background:#8000ff"></div><div class="a sw" style="left:89.0px;top:611px;background:#ff0080"></div>
<div class="a sw" style="left:102.4px;top:597.5px;background:#804000"></div><div class="a sw" style="left:102.4px;top:611px;background:#ff8040"></div>
</body>
</html>
